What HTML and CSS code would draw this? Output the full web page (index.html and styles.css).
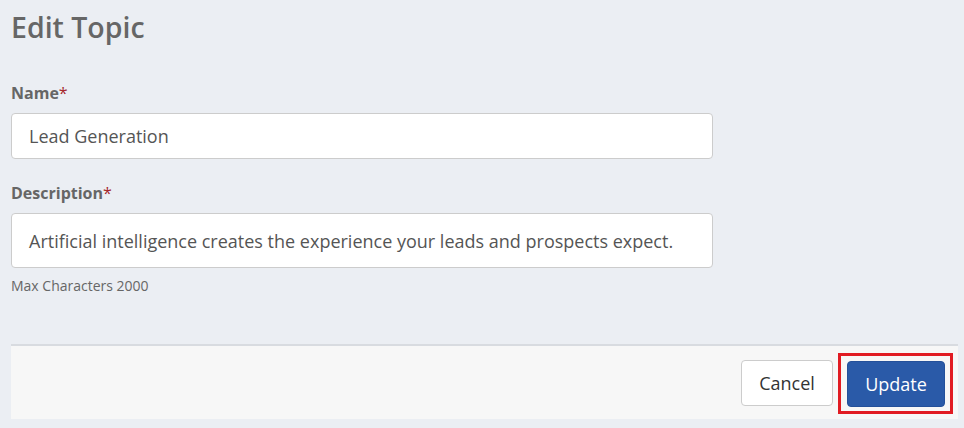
FILE: index.html
```html
<!DOCTYPE html>
<html>
<head>
<meta charset="utf-8">
<link rel="stylesheet" href="styles.css">
</head>
<body>
<div class="page">
  <h1 class="title">Edit Topic</h1>
  <div class="field field-name">
    <label class="label">Name<span class="req">*</span></label>
    <div class="input">Lead Generation</div>
  </div>
  <div class="field field-desc">
    <label class="label">Description<span class="req">*</span></label>
    <div class="input textarea">Artificial intelligence creates the experience your leads and prospects expect.</div>
    <div class="hint">Max Characters 2000</div>
  </div>
  <div class="footer">
    <button class="btn btn-cancel">Cancel</button>
    <div class="highlight"><button class="btn btn-update">Update</button></div>
  </div>
</div>
</body>
</html>
```
FILE: styles.css
```css
* { box-sizing: border-box; }
html, body { margin: 0; padding: 0; }
body {
  background: #ebeef3;
  font-family: "Open Sans", "Noto Sans", sans-serif;
  color: #666;
  width: 964px;
  height: 428px;
  overflow: hidden;
}
.page {
  padding: 8px 6px 0 11px;
}
.title {
  margin: 0;
  font-size: 28.5px;
  font-weight: 600;
  color: #666;
  line-height: 38px;
}
.field { width: 702px; }
.field-name { margin-top: 36px; }
.field-desc { margin-top: 23px; }
.label {
  display: block;
  font-size: 16px;
  font-weight: 700;
  line-height: 22px;
  margin-bottom: 9px;
  color: #666;
}
.req { color: #a5262b; font-weight: 400; }
.input {
  height: 46px;
  background: #fff;
  border: 1px solid #ccc;
  border-radius: 4px;
  padding: 0 17px;
  display: flex;
  align-items: center;
  font-size: 18px;
  color: #555;
}
.textarea { height: 55px; }
.hint {
  font-size: 14px;
  color: #666;
  margin-top: 8px;
  line-height: 19px;
}
.footer {
  margin-top: 49px;
  width: 947px;
  height: 75px;
  background: #f7f7f7;
  border-top: 2px solid #d8dbe0;
  display: flex;
  align-items: center;
  justify-content: flex-end;
  padding-right: 5px;
}
.btn {
  height: 46px;
  border-radius: 4px;
  font-family: inherit;
  font-size: 18px;
  cursor: pointer;
  padding: 0;
}
.btn-cancel {
  width: 92px;
  background: #fff;
  border: 1px solid #ccc;
  color: #333;
  margin-right: 5px;
}
.highlight {
  border: 3px solid #e11b22;
  padding: 5px 5px 4px 6px;
  margin-top: 2px;
}
.btn-update {
  display: block;
  width: 98px;
  background: #2a5aa8;
  border: 1px solid #24509a;
  color: #fff;
}
```
